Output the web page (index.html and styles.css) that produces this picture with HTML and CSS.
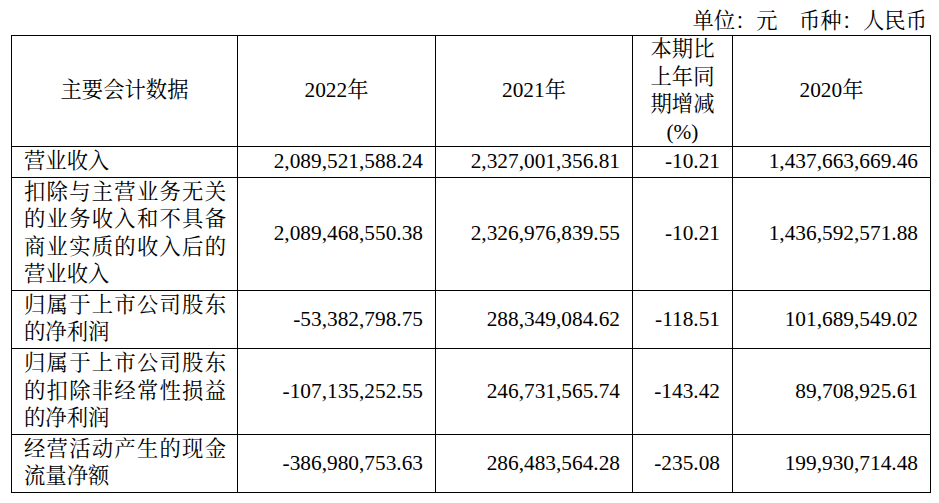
FILE: index.html
```html
<!DOCTYPE html>
<html lang="zh-CN">
<head>
<meta charset="utf-8">
<title>主要会计数据</title>
<link rel="stylesheet" href="styles.css">
</head>
<body>
<div class="page">
  <div class="unit">单位：元&emsp;币种：人民币</div>
  <table class="data">
    <colgroup>
      <col class="c1"><col class="c2"><col class="c3"><col class="c4"><col class="c5">
    </colgroup>
    <thead>
      <tr>
        <th>主要会计数据</th>
        <th>2022年</th>
        <th>2021年</th>
        <th class="narrow">本期比<br>上年同<br>期增减<br>(%)</th>
        <th>2020年</th>
      </tr>
    </thead>
    <tbody>
      <tr>
        <td class="label">营业收入</td>
        <td class="num">2,089,521,588.24</td>
        <td class="num">2,327,001,356.81</td>
        <td class="num">-10.21</td>
        <td class="num">1,437,663,669.46</td>
      </tr>
      <tr>
        <td class="label">扣除与主营业务无关的业务收入和不具备商业实质的收入后的营业收入</td>
        <td class="num">2,089,468,550.38</td>
        <td class="num">2,326,976,839.55</td>
        <td class="num">-10.21</td>
        <td class="num">1,436,592,571.88</td>
      </tr>
      <tr>
        <td class="label">归属于上市公司股东的净利润</td>
        <td class="num">-53,382,798.75</td>
        <td class="num">288,349,084.62</td>
        <td class="num">-118.51</td>
        <td class="num">101,689,549.02</td>
      </tr>
      <tr>
        <td class="label">归属于上市公司股东的扣除非经常性损益的净利润</td>
        <td class="num">-107,135,252.55</td>
        <td class="num">246,731,565.74</td>
        <td class="num">-143.42</td>
        <td class="num">89,708,925.61</td>
      </tr>
      <tr>
        <td class="label">经营活动产生的现金流量净额</td>
        <td class="num">-386,980,753.63</td>
        <td class="num">286,483,564.28</td>
        <td class="num">-235.08</td>
        <td class="num">199,930,714.48</td>
      </tr>
    </tbody>
  </table>
</div>
</body>
</html>
```

FILE: styles.css
```css
html, body {
  margin: 0;
  padding: 0;
  background: #ffffff;
}

body {
  font-family: "Liberation Serif", "Noto Serif CJK SC", "Noto Sans CJK SC", serif;
  font-size: 21.33px;
  color: #000000;
}

.page {
  padding: 8px 10px 0 11px;
  width: 918px;
}

.unit {
  text-align: right;
  line-height: 27px;
  padding-right: 2px;
}

.data {
  border-collapse: collapse;
  table-layout: fixed;
  width: 919px;
}

.c1 { width: 226px; }
.c2 { width: 198px; }
.c3 { width: 197px; }
.c4 { width: 100px; }
.c5 { width: 198px; }

.data th,
.data td {
  border: 1px solid #000000;
  vertical-align: middle;
  line-height: 27.5px;
  font-weight: normal;
}

.data th {
  text-align: center;
  padding: 0;
}

.data td {
  padding: 1.1px 12px;
}

.data td.label {
  text-align: justify;
  padding-left: 12px;
  padding-right: 11px;
}

.data td.num {
  text-align: right;
  white-space: nowrap;
}
```
